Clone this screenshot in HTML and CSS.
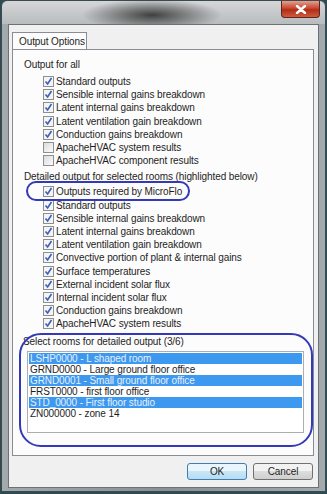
FILE: index.html
```html
<!DOCTYPE html>
<html>
<head>
<meta name="viewport" content="width=device-width, initial-scale=1">
<link rel="stylesheet" href="styles.css">
</head>
<body>

<div class="window">
    <div class="titlebar">
        <span class="closeBtn">
            <svg width="12" height="9" viewBox="0 0 12 9"><path d="M2 1 L10 8 M10 1 L2 8" stroke="#fff" stroke-width="2.4" stroke-linecap="round"/></svg>
        </span>
    </div>

    <div class="client">
        <div class="tabs">
            <span class="tab">Output Options</span>
        </div>

        <div class="panel">
            <div class="heading">Output for all</div>
            <ul class="checks">
                <li class="on"><i></i>Standard outputs</li>
                <li class="on"><i></i>Sensible internal gains breakdown</li>
                <li class="on"><i></i>Latent internal gains breakdown</li>
                <li class="on"><i></i>Latent ventilation gain breakdown</li>
                <li class="on"><i></i>Conduction gains breakdown</li>
                <li><i></i>ApacheHVAC system results</li>
                <li><i></i>ApacheHVAC component results</li>
            </ul>

            <div class="heading second">Detailed output for selected rooms (highlighted below)</div>
            <ul class="checks second">
                <li class="on"><i></i>Outputs required by MicroFlo</li>
                <li class="on"><i></i>Standard outputs</li>
                <li class="on"><i></i>Sensible internal gains breakdown</li>
                <li class="on"><i></i>Latent internal gains breakdown</li>
                <li class="on"><i></i>Latent ventilation gain breakdown</li>
                <li class="on"><i></i>Convective portion of plant &amp; internal gains</li>
                <li class="on"><i></i>Surface temperatures</li>
                <li class="on"><i></i>External incident solar flux</li>
                <li class="on"><i></i>Internal incident solar flux</li>
                <li class="on"><i></i>Conduction gains breakdown</li>
                <li class="on"><i></i>ApacheHVAC system results</li>
            </ul>

            <div class="heading rooms">Select rooms for detailed output (3/6)</div>
            <ul class="listbox">
                <li class="sel">LSHP0000 - L shaped room</li>
                <li>GRND0000 - Large ground floor office</li>
                <li class="sel">GRND0001 - Small ground floor office</li>
                <li>FRST0000 - first floor office</li>
                <li class="sel">STD_0000 - First floor studio</li>
                <li>ZN000000 - zone 14</li>
            </ul>

            <!-- hand drawn highlights over the screenshot -->
            <div class="mark markFlo"></div>
            <div class="mark markRooms"></div>
        </div>

        <div class="buttons">
            <span class="btn default">OK</span>
            <span class="btn">Cancel</span>
        </div>
    </div>
</div>

</body>
</html>
```

FILE: styles.css
```css
* {
    box-sizing: border-box;
}

body {
    margin: 0;
    background: #2f4b52;
    font-family: "Liberation Sans", Arial, sans-serif;
    font-size: 10px;
    letter-spacing: -0.1px;
    color: #1e1e1e;
}

/* Window frame */
.window {
    width: 325px;
    height: 492px;
    margin-left: 1px;
    border-radius: 6px 6px 0 0;
    border: 1px solid #3c4a4e;
    background: linear-gradient(to right, #a3aaad, #8a9195 50%, #a3aaad);
    padding: 0 6px 5px 6px;
}

.titlebar {
    height: 23px;
    margin: 0 -6px;
    border-radius: 6px 6px 0 0;
    background:
        radial-gradient(ellipse 70px 16px at 150px 14px, rgba(40, 40, 40, 0.85), rgba(40, 40, 40, 0) 100%),
        linear-gradient(to bottom, #d4d6d7, #b9bcbd);
    display: flex;
    justify-content: flex-end;
    padding-right: 5px;
}

.closeBtn {
    width: 39px;
    height: 17px;
    border: 1px solid #5a2420;
    border-top: none;
    border-radius: 0 0 4px 4px;
    background: linear-gradient(to bottom, #e4a08f, #c8472e 45%, #b02d18 55%, #d25a3c);
    display: flex;
    align-items: center;
    justify-content: center;
}

.client {
    height: 464px;
    background: #f0f0f0;
    border: 1px solid #6b7174;
    padding: 6px 4px 0 3px;
}

/* Tabs */
.tabs {
    display: flex;
    height: 18px;
}

.tab {
    border: 1px solid #898c95;
    border-bottom: none;
    background: #fcfcfc;
    padding: 3px 6px 0 6px;
    width: 75px;
    white-space: nowrap;
    position: relative;
    top: 1px;
}

.panel {
    position: relative;
    height: 407px;
    border: 1px solid #898c95;
    background: #fcfcfc;
    padding: 8px 0 0 11px;
}

.heading {
    height: 13px;
    line-height: 13px;
    white-space: nowrap;
}

.heading.second {
    margin-top: 3px;
}

.heading.rooms {
    margin-top: 5px;
    margin-left: -1px;
}

/* Checkbox rows */
.checks {
    list-style: none;
    margin: 4px 0 0 0;
    padding: 0 0 0 19px;
}

.checks.second {
    margin-top: 2px;
}

.checks li {
    height: 13.2px;
    display: flex;
    align-items: center;
    white-space: nowrap;
}

.checks i {
    width: 11px;
    height: 11px;
    margin-right: 2px;
    border: 1px solid #8e8f8f;
    background: linear-gradient(135deg, #dcdcdc, #fbfbfb);
    flex: none;
}

.checks li.on i {
    background-color: #f4f4f4;
    background-image: url("data:image/svg+xml;utf8,<svg xmlns='http://www.w3.org/2000/svg' width='9' height='9' viewBox='0 0 9 9'><path d='M1.5 4.5 L3.6 7 L7.5 1' fill='none' stroke='%233a5fb8' stroke-width='1.6'/></svg>");
    background-repeat: no-repeat;
    background-position: center;
}

/* Room list */
.listbox {
    list-style: none;
    margin: 3px 0 0 3px;
    padding: 0;
    width: 277px;
    height: 82px;
    border: 1px solid #aaadb2;
    background: #fff;
    padding-top: 1px;
}

.listbox li {
    height: 11px;
    line-height: 11px;
    padding-left: 1px;
    margin: 0 1px;
    white-space: nowrap;
}

.listbox li.sel {
    background: #3d98f0;
    color: #e6f0fb;
}

/* Blue annotation outlines */
.mark {
    position: absolute;
    border: 2.5px solid #3339b8;
}

.markFlo {
    left: 13px;
    top: 131px;
    width: 164px;
    height: 20px;
    border-radius: 12px;
}

.markRooms {
    left: 6px;
    top: 283px;
    width: 294px;
    height: 114px;
    border-radius: 22px;
}

/* Buttons */
.buttons {
    display: flex;
    justify-content: flex-end;
    gap: 6px;
    margin-top: 7px;
    padding-right: 1px;
}

.btn {
    width: 60px;
    height: 17px;
    line-height: 15px;
    text-align: center;
    border: 1px solid #707070;
    border-radius: 3px;
    background: linear-gradient(to bottom, #f2f2f2 50%, #dddddd 50%, #cfcfcf);
}

.btn.default {
    border-color: #3c7fb1;
    background: linear-gradient(to bottom, #eaf6fd 50%, #c9e6f7 50%, #b7dcf2);
}
```
